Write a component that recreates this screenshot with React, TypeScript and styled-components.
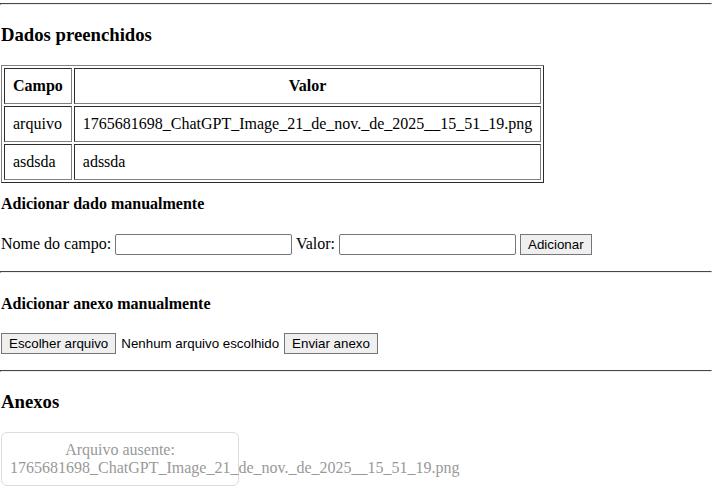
import React from 'react';
import styled, { createGlobalStyle } from 'styled-components';

const GlobalStyle = createGlobalStyle`
    body {
        margin: 0;
        background: #fff;
        color: #000;
        font-family: 'Liberation Serif', 'Times New Roman', serif;
        font-size: 16px;
    }
`;

const rows = [
    { campo: 'arquivo', valor: '1765681698_ChatGPT_Image_21_de_nov._de_2025__15_51_19.png' },
    { campo: 'asdsda', valor: 'adssda' },
];

const missingFile = '1765681698_ChatGPT_Image_21_de_nov._de_2025__15_51_19.png';

const App = () => {
    return (
        <Page>
            <GlobalStyle />
            <Rule $top={3} />
            <Title>Dados preenchidos</Title>
            <DataTable>
                <thead>
                    <tr>
                        <HeadCell>Campo</HeadCell>
                        <HeadCell>Valor</HeadCell>
                    </tr>
                </thead>
                <tbody>
                    {rows.map((row) => (
                        <tr key={row.campo}>
                            <Cell>{row.campo}</Cell>
                            <Cell>{row.valor}</Cell>
                        </tr>
                    ))}
                </tbody>
            </DataTable>

            <SubTitle $top={12}>Adicionar dado manualmente</SubTitle>
            <FormRow>
                Nome do campo: <TextInput type='text' /> Valor: <TextInput type='text' />{' '}
                <Button type='button'>Adicionar</Button>
            </FormRow>

            <Rule />
            <SubTitle $bottom={20}>Adicionar anexo manualmente</SubTitle>
            <UploadRow>
                <Button type='button'>Escolher arquivo</Button>
                <FileName>Nenhum arquivo escolhido</FileName>
                <Button type='button'>Enviar anexo</Button>
            </UploadRow>

            <Rule />
            <Title>Anexos</Title>
            <Attachments>
                <MissingCard>
                    Arquivo ausente:
                    <br />
                    {missingFile}
                </MissingCard>
            </Attachments>
        </Page>
    );
};

const Page = styled.div`
    padding: 0 1px 20px;
`;

const Rule = styled.hr<{ $top?: number }>`
    margin: ${(p) => (p.$top !== undefined ? `${p.$top}px` : '8px')} -1px 8px;
    border: 1px inset gray;
    border-color: #9a9a9a #eeeeee #eeeeee #9a9a9a;
    height: 0;
`;

const Title = styled.h3`
    font-size: 18.72px;
    font-weight: bold;
    margin: 19px 0;
`;

const SubTitle = styled.h4<{ $top?: number; $bottom?: number }>`
    font-size: 16px;
    font-weight: bold;
    margin-top: ${(p) => (p.$top !== undefined ? `${p.$top}px` : '21.28px')};
    margin-bottom: ${(p) => (p.$bottom !== undefined ? `${p.$bottom}px` : '21.28px')};
`;

const DataTable = styled.table`
    border: 1px outset gray;
    border-spacing: 2px;
`;

const HeadCell = styled.th`
    border: 1px inset gray;
    padding: 8px;
    font-weight: bold;
    text-align: center;
`;

const Cell = styled.td`
    border: 1px inset gray;
    padding: 8px;
`;

const FormRow = styled.div`
    margin-bottom: 16px;
`;

const UploadRow = styled.div`
    display: flex;
    align-items: center;
    height: 21px;
    margin-bottom: 16px;
`;

const TextInput = styled.input`
    box-sizing: border-box;
    width: 177px;
    height: 21px;
    padding: 1px 2px;
    border: 1px solid #767676;
    border-radius: 2px;
    font-family: 'Liberation Sans', Arial, sans-serif;
    font-size: 13.33px;
    vertical-align: baseline;
`;

const Button = styled.button`
    box-sizing: border-box;
    height: 21px;
    padding: 1px 7px;
    background: #efefef;
    border: 1px solid #767676;
    border-radius: 0;
    color: #000;
    font-family: 'Liberation Sans', Arial, sans-serif;
    font-size: 13.33px;
`;

const FileName = styled.span`
    margin: 0 5px;
    font-family: 'Liberation Sans', Arial, sans-serif;
    font-size: 13.33px;
`;

const Attachments = styled.div`
    display: flex;
    gap: 10px;
`;

const MissingCard = styled.div`
    width: 220px;
    padding: 8px;
    border: 1px solid #dddddd;
    border-radius: 6px;
    color: #999999;
    text-align: center;
    line-height: 18px;
`;

export default App;
